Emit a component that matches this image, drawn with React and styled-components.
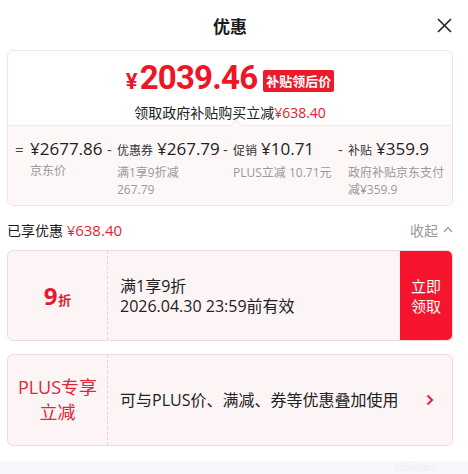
import React from 'react';
import styled, { createGlobalStyle } from 'styled-components';

const GlobalStyle = createGlobalStyle`
  body {
    margin: 0;
    background: #ffffff;
    font-family: "Open Sans", "Noto Sans CJK SC", sans-serif;
    color: #1a1a1a;
  }
`;

const breakdown = [
  { sep: '=', label: '', price: '¥2677.86', note: '京东价', width: 86 },
  { sep: '-', label: '优惠券', price: '¥267.79', note: '满1享9折减 267.79', width: 110 },
  { sep: '-', label: '促销', price: '¥10.71', note: 'PLUS立减 10.71元', width: 109 },
  { sep: '-', label: '补贴', price: '¥359.9', note: '政府补贴京东支付减¥359.9', width: 0 },
];

const App = () => {
  return (
    <Page>
      <GlobalStyle />
      <Header>
        <span />
        <Title>优惠</Title>
        <CloseButton aria-label="close">
          <svg width="15" height="15" viewBox="0 0 15 15">
            <path d="M1 1L14 14M14 1L1 14" stroke="#222" strokeWidth="1.6" fill="none" />
          </svg>
        </CloseButton>
      </Header>

      <SummaryCard>
        <PriceArea>
          <PriceRow>
            <BigPrice>
              <Yen>¥</Yen>2039.46
            </BigPrice>
            <Badge>补贴领后价</Badge>
          </PriceRow>
          <SubLine>
            领取政府补贴购买立减<RedText>¥638.40</RedText>
          </SubLine>
        </PriceArea>
        <Breakdown>
          {breakdown.map((item) => (
            <Item key={item.price} $width={item.width}>
              <Sep $eq={item.sep === '='}>{item.sep}</Sep>
              <ItemBody>
                <ItemTop>
                  {item.label && <ItemLabel>{item.label}</ItemLabel>}
                  <ItemPrice>{item.price}</ItemPrice>
                </ItemTop>
                <ItemNote>{item.note}</ItemNote>
              </ItemBody>
            </Item>
          ))}
        </Breakdown>
      </SummaryCard>

      <SavedRow>
        <SavedText>
          已享优惠 <SavedAmount>¥638.40</SavedAmount>
        </SavedText>
        <Collapse>
          收起
          <svg width="10" height="7" viewBox="0 0 10 7">
            <path d="M1 6L5 1.5L9 6" stroke="#999" strokeWidth="1.2" fill="none" />
          </svg>
        </Collapse>
      </SavedRow>

      <CouponList>
        <Coupon $h={91}>
          <CouponLeft>
            <Discount>
              9<small>折</small>
            </Discount>
          </CouponLeft>
          <CouponBody>
            <div>满1享9折</div>
            <div>2026.04.30 23:59前有效</div>
          </CouponBody>
          <ClaimButton>
            立即
            <br />
            领取
          </ClaimButton>
        </Coupon>

        <Coupon $h={92}>
          <CouponLeft>
            <PlusTag>
              PLUS专享
              <br />
              立减
            </PlusTag>
          </CouponLeft>
          <CouponBody>
            <div>可与PLUS价、满减、券等优惠叠加使用</div>
          </CouponBody>
          <Arrow>
            <svg width="8" height="12" viewBox="0 0 8 12">
              <path d="M1.5 1.5L6 6L1.5 10.5" stroke="#e2233a" strokeWidth="2" fill="none" />
            </svg>
          </Arrow>
        </Coupon>
      </CouponList>

      <FooterStrip>
        <Watermark>HBuilder</Watermark>
      </FooterStrip>
    </Page>
  );
};

const Page = styled.div`
  width: 468px;
  height: 474px;
  box-sizing: border-box;
  padding: 0 15px 0 7px;
  display: flex;
  flex-direction: column;
  overflow: hidden;

  & > * {
    flex-shrink: 0;
  }
`;

const Header = styled.div`
  height: 50px;
  display: grid;
  grid-template-columns: 1fr auto 1fr;
  align-items: center;
`;

const Title = styled.div`
  font-family: "Noto Sans CJK SC", sans-serif;
  font-size: 17px;
  font-weight: 700;
  color: #1a1a1a;
`;

const CloseButton = styled.button`
  justify-self: end;
  border: none;
  background: none;
  padding: 0;
  margin-right: 1px;
  display: flex;
  cursor: pointer;
`;

const SummaryCard = styled.div`
  border: 1px solid #f2e3e6;
  border-radius: 6px;
  overflow: hidden;
`;

const PriceArea = styled.div`
  height: 74px;
  display: flex;
  flex-direction: column;
  align-items: center;
  justify-content: center;
  gap: 4px;
  padding-top: 6px;
  box-sizing: border-box;
`;

const PriceRow = styled.div`
  display: flex;
  align-items: center;
  gap: 6px;
`;

const BigPrice = styled.div`
  font-family: Roboto, sans-serif;
  font-weight: 700;
  font-size: 33px;
  letter-spacing: -0.8px;
  line-height: 36px;
  color: #ee1526;
`;

const Yen = styled.span`
  font-size: 22px;
  margin-right: 3px;
`;

const Badge = styled.span`
  background: #ec1a2a;
  color: #fff;
  font-family: "Noto Sans CJK SC", sans-serif;
  font-weight: 700;
  font-size: 13px;
  line-height: 22px;
  padding: 0 3px;
  border-radius: 2px;
  margin-top: 2px;
`;

const SubLine = styled.div`
  font-size: 14px;
  line-height: 18px;
  color: #222;
`;

const RedText = styled.span`
  color: #e8192c;
`;

const Breakdown = styled.div`
  position: relative;
  background: #fdf7f8;
  border-top: 1px solid #f4e6e9;
  padding: 11px 8px 7px 7px;
  display: flex;
  gap: 6px;

  &::before {
    content: '';
    position: absolute;
    top: -5px;
    left: 224px;
    width: 8px;
    height: 8px;
    background: #fdf7f8;
    border-left: 1px solid #f4e6e9;
    border-top: 1px solid #f4e6e9;
    transform: rotate(45deg);
  }
`;

const Item = styled.div`
  display: flex;
  gap: 4px;
  min-width: 0;
  ${(p) => (p.$width ? `flex: none; width: ${p.$width}px;` : 'flex: 1;')}
`;

const Sep = styled.div`
  flex: none;
  width: ${(p) => (p.$eq ? '11px' : '6px')};
  font-size: 15px;
  line-height: 24px;
  color: #444;
`;

const ItemBody = styled.div`
  flex: 1;
  min-width: 0;
`;

const ItemTop = styled.div`
  display: flex;
  align-items: baseline;
  gap: 4px;
  white-space: nowrap;
  line-height: 24px;
`;

const ItemLabel = styled.span`
  font-size: 12px;
  color: #333;
`;

const ItemPrice = styled.span`
  font-size: 17px;
  font-weight: 500;
  color: #222;
`;

const ItemNote = styled.div`
  font-size: 12px;
  line-height: 17px;
  color: #999;
  margin-top: 1px;
`;

const SavedRow = styled.div`
  height: 44px;
  display: flex;
  align-items: center;
  justify-content: space-between;
  padding-top: 3px;
  box-sizing: border-box;
`;

const SavedText = styled.div`
  font-size: 14px;
  color: #1a1a1a;
`;

const SavedAmount = styled.span`
  font-size: 15px;
  color: #e0263a;
`;

const Collapse = styled.div`
  display: flex;
  align-items: center;
  gap: 5px;
  font-size: 14px;
  color: #999;
`;

const CouponList = styled.div`
  display: flex;
  flex-direction: column;
  gap: 13px;
`;

const Coupon = styled.div`
  height: ${(p) => p.$h}px;
  box-sizing: border-box;
  display: flex;
  background: #fdf4f6;
  border: 1px solid #f2d9de;
  border-radius: 6px;
  overflow: hidden;
`;

const CouponLeft = styled.div`
  width: 99px;
  flex: none;
  display: flex;
  align-items: center;
  justify-content: center;
  border-right: 1px dashed #ecd2d8;
`;

const Discount = styled.div`
  font-family: "Open Sans", sans-serif;
  font-weight: 700;
  font-size: 24px;
  color: #e8192c;
  line-height: 1;

  small {
    font-family: "Noto Sans CJK SC", sans-serif;
    font-size: 13px;
    margin-left: 1px;
  }
`;

const PlusTag = styled.div`
  font-size: 18px;
  line-height: 25px;
  color: #e0263a;
  text-align: center;
`;

const CouponBody = styled.div`
  flex: 1;
  display: flex;
  flex-direction: column;
  justify-content: center;
  padding-left: 12px;
  font-size: 16px;
  line-height: 20px;
  color: #222;
`;

const ClaimButton = styled.button`
  width: 52px;
  flex: none;
  border: none;
  background: #f6152c;
  color: #fff;
  font-family: "Noto Sans CJK SC", sans-serif;
  font-size: 15px;
  line-height: 20px;
  padding: 0;
  cursor: pointer;
`;

const Arrow = styled.div`
  width: 26px;
  flex: none;
  display: flex;
  align-items: center;
`;

const FooterStrip = styled.div`
  margin: 15px -15px 0 -7px;
  flex: 1 0 auto;
  background: #f6f6fb;
  display: flex;
  justify-content: flex-end;
  align-items: flex-start;
  padding: 1px 32px 0 0;
`;

const Watermark = styled.span`
  font-size: 10px;
  line-height: 11px;
  color: #eeeef4;
`;

export default App;
